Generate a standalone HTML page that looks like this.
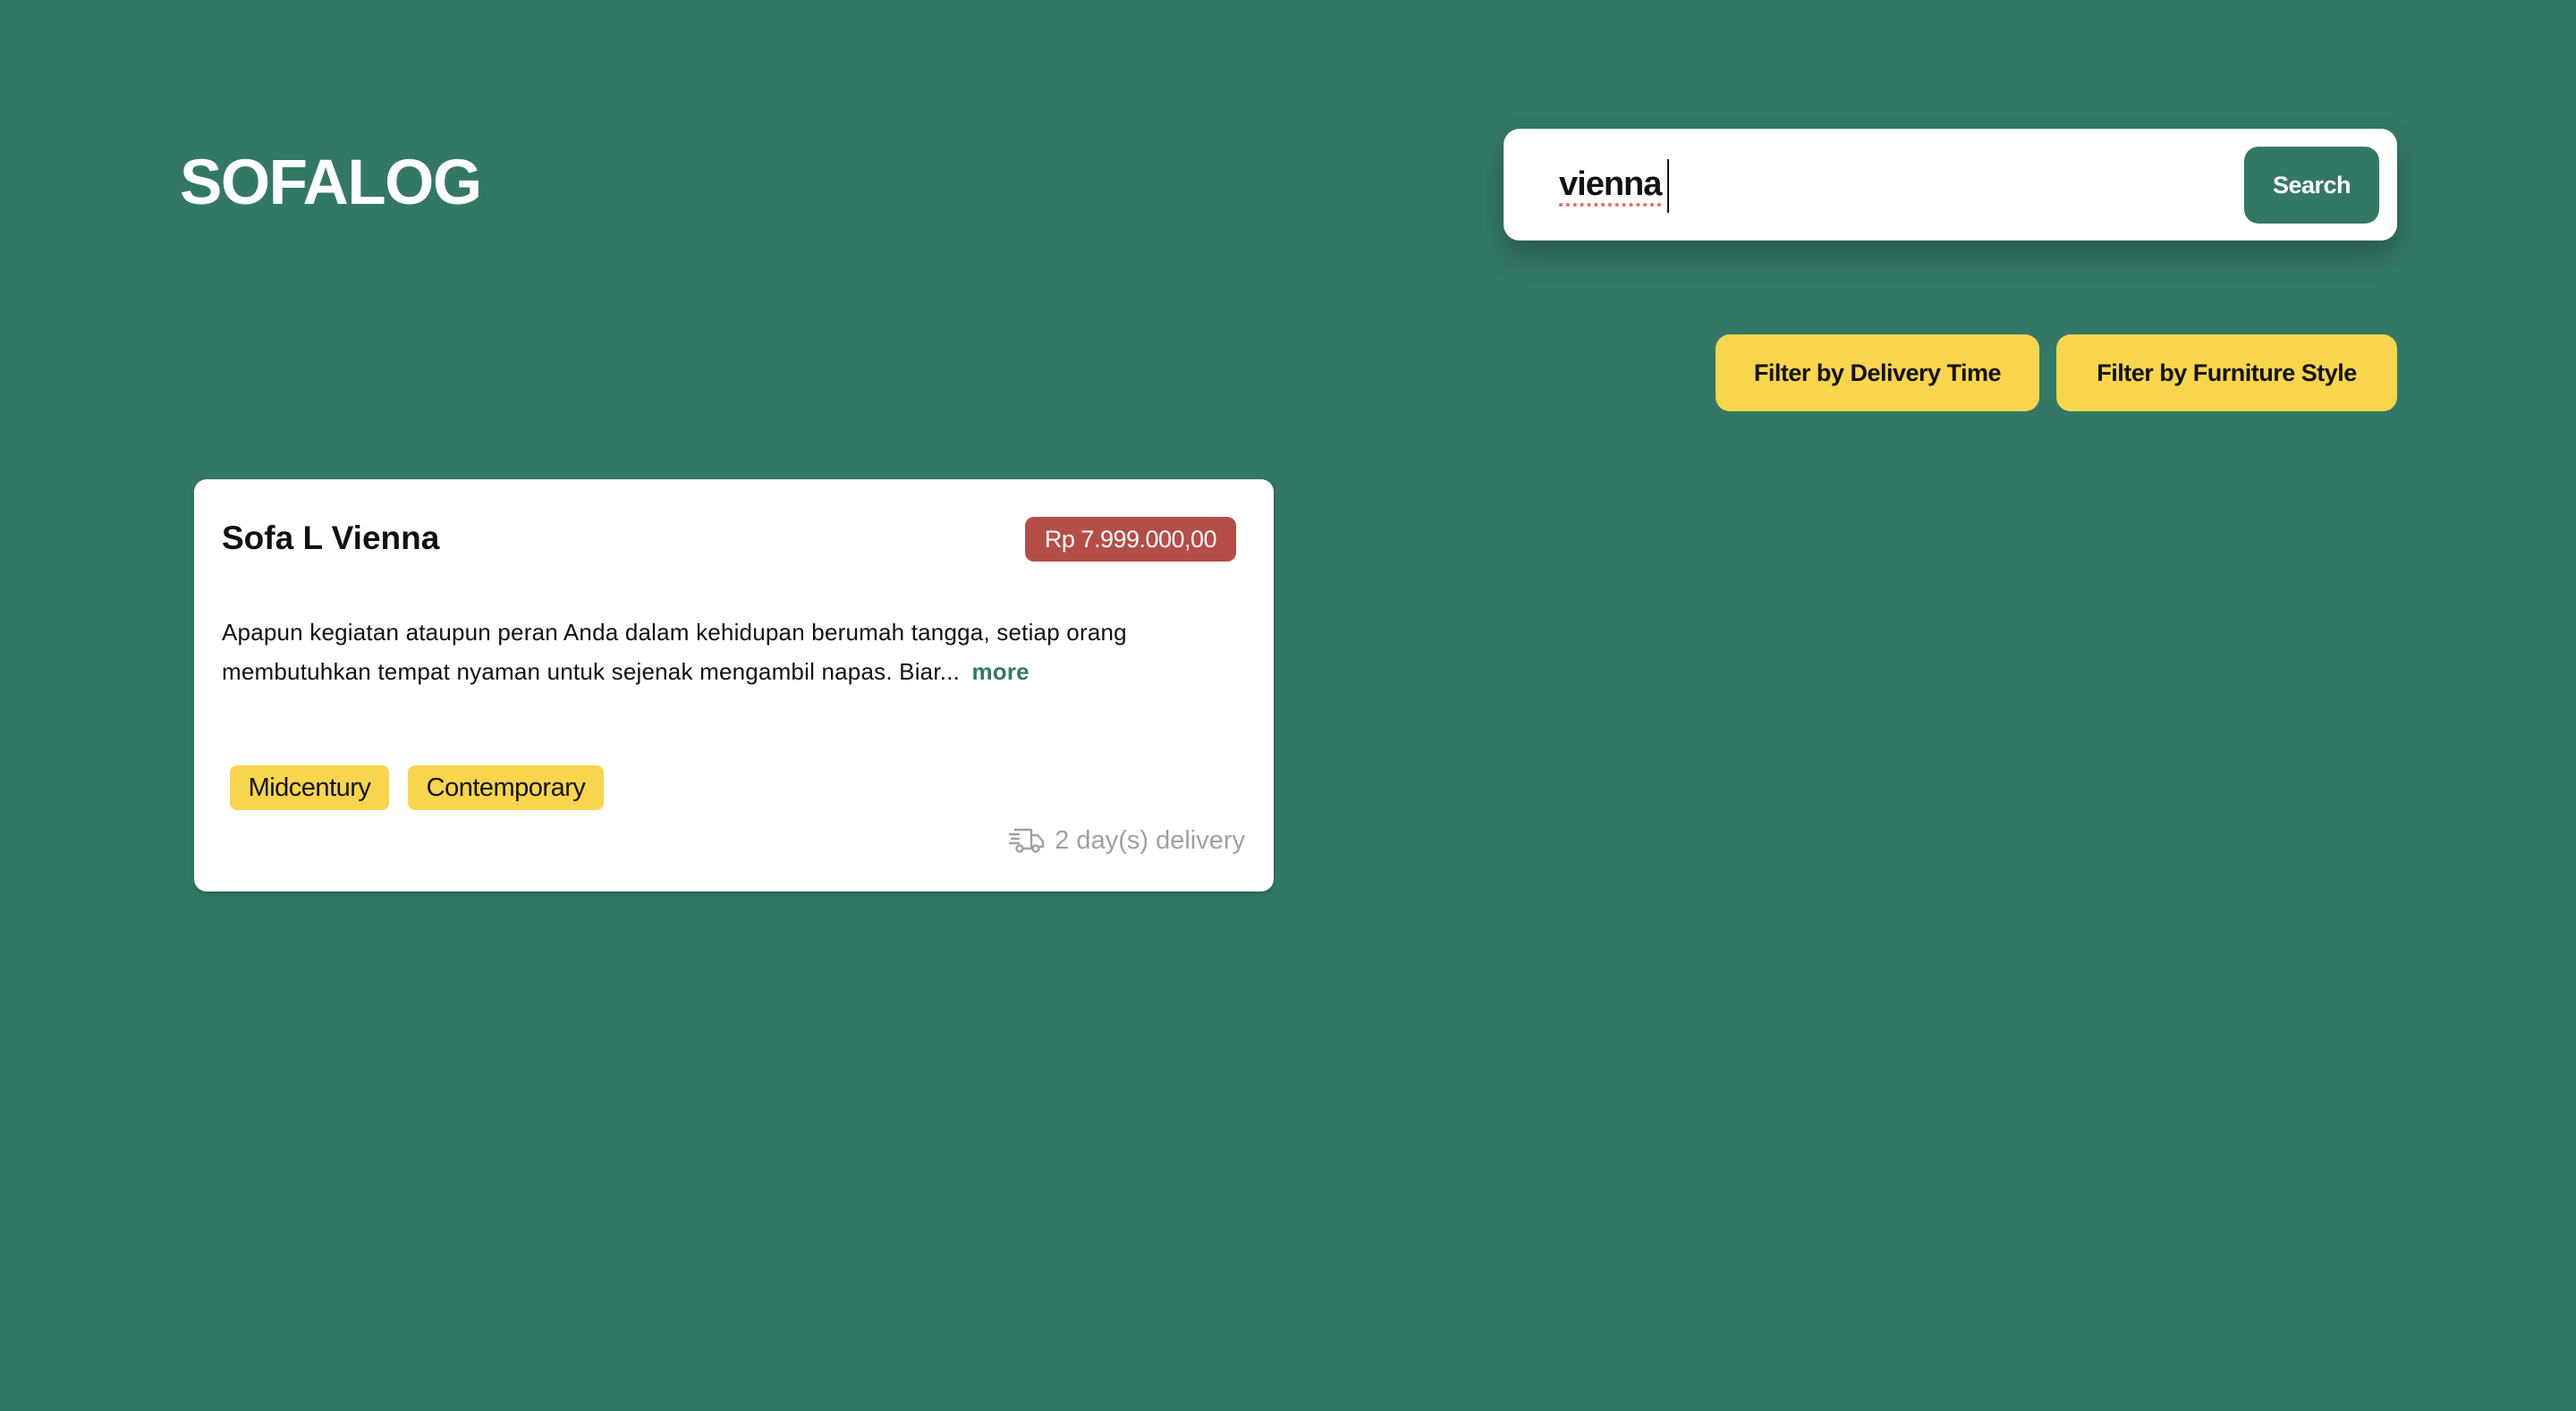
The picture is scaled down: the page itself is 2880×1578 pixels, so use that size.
<!DOCTYPE html>
<html><head><meta charset="utf-8"><style>
*{margin:0;padding:0;box-sizing:border-box}
html,body{width:2880px;height:1578px;overflow:hidden;background:#337866;font-family:"Liberation Sans",sans-serif}
.abs{position:absolute}
.logo{left:201px;top:160px;font-size:71px;font-weight:bold;color:#fff;letter-spacing:-1.5px;line-height:90px}
.search{left:1681px;top:144px;width:999px;height:125px;background:#fff;border-radius:18px;box-shadow:0 16px 30px rgba(0,0,0,.25)}
.q{left:62px;top:38px;font-size:38px;font-weight:bold;color:#111;line-height:48px;letter-spacing:-1px}
.q span{border-bottom:4px dotted #e66;}
.caret{left:183px;top:34px;width:2px;height:60px;background:#111}
.sbtn{left:828px;top:20px;width:151px;height:86px;background:#337866;border-radius:16px;color:#fff;font-weight:bold;font-size:27px;display:flex;align-items:center;justify-content:center;letter-spacing:-.5px}
.fbtn{top:374px;height:86px;background:#f8d54c;border-radius:16px;color:#111;font-weight:bold;font-size:27px;display:flex;align-items:center;justify-content:center;letter-spacing:-.5px}
.card{left:217px;top:536px;width:1207px;height:461px;background:#fff;border-radius:14px;box-shadow:0 2px 6px rgba(0,0,0,.2)}
.title{left:31px;top:44px;font-size:37px;font-weight:bold;color:#111;letter-spacing:0;line-height:44px}
.price{left:929px;top:42px;width:236px;height:50px;background:#b44d47;border-radius:10px;color:#fff;font-size:27px;display:flex;align-items:center;justify-content:center;letter-spacing:-.5px}
.desc{left:31px;top:149px;width:1160px;font-size:26px;line-height:44px;color:#111;letter-spacing:.2px}
.desc b{color:#337866;margin-left:6px}
.tag{top:320px;height:50px;background:#f8d54c;border-radius:8px;font-size:29px;color:#111;display:flex;align-items:center;justify-content:center;letter-spacing:-.5px}
.del{right:32px;top:384px;height:40px;display:flex;align-items:center;color:#9aa3a0;font-size:29px;letter-spacing:0}
</style></head><body>
<div class="abs logo">SOFALOG</div>
<div class="abs search">
  <div class="abs q"><span>vienna</span></div>
  <div class="abs caret"></div>
  <div class="abs sbtn">Search</div>
</div>
<div class="abs fbtn" style="left:1918px;width:362px">Filter by Delivery Time</div>
<div class="abs fbtn" style="left:2299px;width:381px">Filter by Furniture Style</div>
<div class="abs card">
  <div class="abs title">Sofa L Vienna</div>
  <div class="abs price">Rp 7.999.000,00</div>
  <div class="abs desc">Apapun kegiatan ataupun peran Anda dalam kehidupan berumah tangga, setiap orang<br>membutuhkan tempat nyaman untuk sejenak mengambil napas. Biar... <b>more</b></div>
  <div class="abs tag" style="left:40px;width:178px">Midcentury</div>
  <div class="abs tag" style="left:239px;width:219px">Contemporary</div>
  <div class="abs del">
    <svg width="42" height="30" viewBox="0 0 42 30" fill="none" stroke="#9aa3a0" stroke-width="2.4" stroke-linecap="round" stroke-linejoin="round">
      <path d="M8 3h18v19M26 9h7l6 7v6h-3M2 8h10M4 13h8M2 18h10"/>
      <circle cx="13" cy="24" r="3.5"/><circle cx="31" cy="24" r="3.5"/>
      <path d="M16.5 24h11"/>
    </svg>
    <span style="margin-left:10px">2 day(s) delivery</span>
  </div>
</div>
</body></html>
